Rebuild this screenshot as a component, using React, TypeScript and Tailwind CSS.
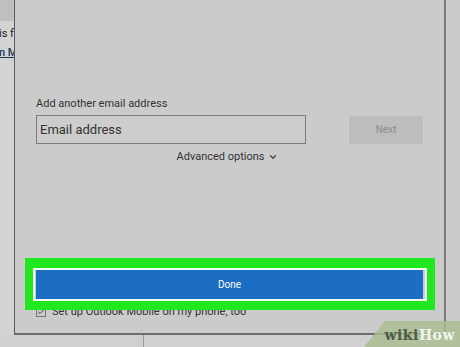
import { ChevronDown, Check } from "lucide-react";

const font = { fontFamily: 'Roboto, "Noto Sans", Arial, sans-serif' };

export default function App() {
  return (
    <div
      className="relative w-[460px] h-[347px] overflow-hidden bg-[#cdcdcd] text-[#333]"
      style={font}
    >
      <div className="flex h-[335px]">
        {/* page behind the dialog, left edge */}
        <div className="w-[14px] flex flex-col overflow-hidden whitespace-nowrap">
          <div className="h-[21px] bg-[#bfbfbf]" />
          <div className="flex-1 bg-[#d3d3d3] text-[11px] leading-[14px]">
            <div className="mt-[6px] -ml-[1px] text-[#222]">is f</div>
            <div className="mt-[5px] -ml-[1px] text-[#1d3558] underline font-medium">n M</div>
          </div>
        </div>

        {/* dialog */}
        <div className="w-[432px] bg-[#cbcbcb] border-l border-[#5a5a66] border-r-2 border-r-[#7a7a7a] border-b-2 border-b-[#6e6e6e] flex flex-col px-[21px] pt-[97px]">
          <div className="text-[11px] leading-[14px] text-[#333]">Add another email address</div>
          <div className="flex items-center mt-[4px]">
            <div className="w-[270px] h-[29px] border border-[#7c7c7c] bg-[#cdcdcd] flex items-center pl-[3px] text-[13px] text-[#333]">
              Email address
            </div>
            <div className="ml-auto w-[74px] h-[28px] bg-[#bdbdbd] flex items-center justify-center text-[10px] text-[#8c8c8c]">
              Next
            </div>
          </div>
          <div className="mt-[6px] flex items-center justify-center text-[11px] leading-[14px] text-[#333] pr-[4px]">
            Advanced options
            <ChevronDown size={10} strokeWidth={3} className="ml-[4px] text-[#444]" />
          </div>

          <div className="mt-[106px] h-[29px] bg-[#1b6ec3] flex items-center justify-center text-[10px] text-white">
            Done
          </div>
          <div className="mt-[6px] flex items-center text-[11px] leading-[14px] text-[#333]">
            <div className="w-[10px] h-[10px] border border-[#777] flex items-center justify-center">
              <Check size={8} strokeWidth={3} className="text-[#444]" />
            </div>
            <span className="ml-[6px]">Set up Outlook Mobile on my phone, too</span>
          </div>
        </div>

        <div className="flex-1 bg-[#cbcbcb]" />
      </div>

      {/* below the dialog */}
      <div className="flex h-[12px] bg-[#d0d0d0]">
        <div className="w-[143px]" />
        <div className="w-px bg-[#9a9a9a]" />
      </div>

      {/* green highlight */}
      <div className="absolute left-[25px] top-[258px] w-[410px] h-[52px] border-[#1fe81f] border-x-[8px] border-t-[10px] border-b-[9px] pointer-events-none">
        <div className="w-full h-full border-2 border-[#f4fff4]" />
      </div>

      {/* watermark */}
      <div
        className="absolute right-0 bottom-0 w-[96px] h-[26px] bg-[#a8bd8e]/80"
        style={{ clipPath: "polygon(22% 0, 100% 0, 100% 100%, 0 100%)" }}
      />
      <div
        className="absolute right-[5px] bottom-[2px] text-[14px] font-bold leading-[20px] tracking-[0.5px]"
        style={{ fontFamily: '"DejaVu Serif", "Liberation Serif", serif' }}
      >
        <span className="text-[#4e5a48]">wiki</span>
        <span className="text-[#f2f5ee]">How</span>
      </div>
    </div>
  );
}
